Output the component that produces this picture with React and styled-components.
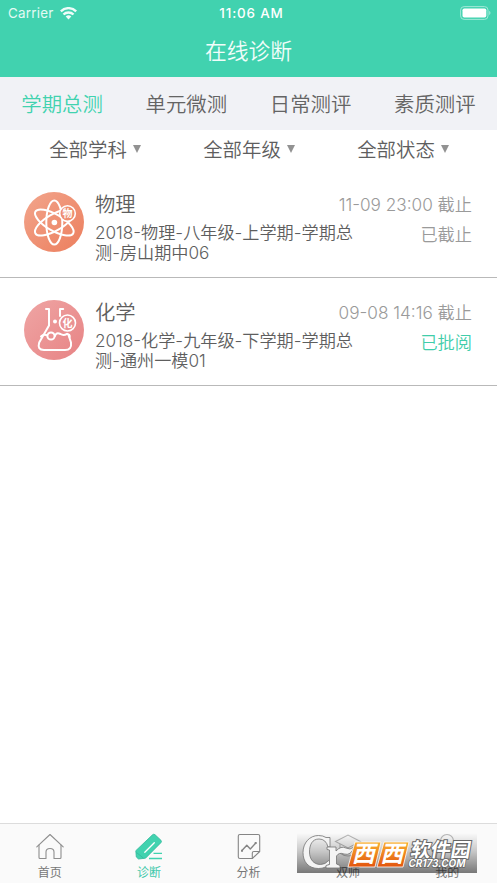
import React from 'react';
import styled, { createGlobalStyle } from 'styled-components';

const GlobalStyle = createGlobalStyle`
  * {
    box-sizing: border-box;
  }

  body {
    margin: 0;
    background: #fff;
    font-family: Inter, 'Noto Sans CJK SC', sans-serif;
    font-weight: 350;
    color: #5e5e5e;
  }

  svg {
    flex: none;
  }
`;

const Screen = styled.div`
  width: 100%;
  height: 883px;
  display: flex;
  flex-direction: column;
  overflow: hidden;
  position: relative;
`;

const Header = styled.header`
  height: 77px;
  flex: none;
  background: #41d2af;
  color: #fff;
`;

const StatusBar = styled.div`
  height: 26px;
  padding: 0 6px 0 8px;
  display: grid;
  grid-template-columns: 1fr auto 1fr;
  align-items: center;
  font-size: 13.4px;
  line-height: 26px;
`;

const Carrier = styled.div`
  display: flex;
  align-items: center;
  gap: 6px;
  letter-spacing: 0.25px;
  font-weight: 400;
  color: #e4faf4;
`;

const Clock = styled.div`
  font-weight: 500;
  font-size: 13.4px;
  letter-spacing: 0.85px;
  padding-left: 4px;
  color: #fff;
`;

const BatteryHolder = styled.div`
  display: flex;
  justify-content: flex-end;
  padding-bottom: 1px;
`;

const PageTitle = styled.h1`
  margin: 0;
  font-size: 21.8px;
  font-weight: 350;
  line-height: 50px;
  text-align: center;
  color: #f1fdfa;
`;

const Tabs = styled.nav`
  height: 53px;
  flex: none;
  display: flex;
  background: #f1f2f6;
`;

const Tab = styled.div`
  flex: 1;
  text-align: center;
  font-size: 20.4px;
  line-height: 55px;
  color: ${props => (props.$active ? '#41d2af' : '#646464')};
`;

const Filters = styled.div`
  height: 40px;
  flex: none;
  display: flex;
  padding: 0 17px 0 18px;
`;

const Filter = styled.div`
  flex: 1;
  display: flex;
  align-items: center;
  justify-content: center;
  gap: 6px;
  font-size: 19.4px;
  line-height: 40px;
  height: 40px;
`;

const Caret = styled.i`
  margin-top: -2px;
  border-left: 4px solid transparent;
  border-right: 4px solid transparent;
  border-top: 8px solid #929292;
`;

const Row = styled.article`
  height: 108px;
  flex: none;
  display: flex;
  padding: 22px 25px 0 24px;
  border-bottom: 1px solid #b9b9b9;
`;

const Info = styled.div`
  flex: 1;
  min-width: 0;
  padding-left: 11px;
`;

const Subject = styled.h2`
  margin: 0;
  height: 31px;
  font-size: 20.3px;
  font-weight: 350;
  line-height: 26px;
`;

const Description = styled.p`
  margin: 0;
  font-size: 17.15px;
  line-height: 20px;
  white-space: nowrap;
`;

const Meta = styled.div`
  text-align: right;
  font-size: 17.2px;
  line-height: 25px;
  white-space: nowrap;
  color: #9a9a9a;
`;

const Status = styled.div`
  margin-top: 5px;
  color: ${props => (props.$done ? '#41cdaa' : '#9a9a9a')};
`;

const TabBar = styled.footer`
  height: 60px;
  margin-top: auto;
  flex: none;
  display: flex;
  background: #fafafa;
  border-top: 1px solid #dcdcdc;
`;

const BarItem = styled.div`
  flex: 1;
  display: flex;
  flex-direction: column;
  align-items: center;
  padding-top: 8px;
  font-size: 12px;
  line-height: 16px;
  font-weight: 400;
  color: ${props => (props.$active ? '#41c8aa' : '#777')};

  svg {
    margin-bottom: 3px;
  }
`;

const Watermark = styled.svg`
  position: absolute;
  right: 20px;
  bottom: 10px;
`;

function Wifi() {
  return (
    <svg width="17" height="13" viewBox="0 0 17 13" fill="none" stroke="#effcf9" strokeWidth="2.4">
      <path d="M.8 4.3a11 11 0 0 1 15.4 0" />
      <path d="M3.5 7.5a7.1 7.1 0 0 1 10 0" />
      <path d="M8.5 12.5 5.7 9.6a4 4 0 0 1 5.6 0Z" fill="#effcf9" stroke="none" />
    </svg>
  );
}

function Battery() {
  return (
    <svg width="31" height="14" viewBox="0 0 31 14">
      <rect x=".6" y=".6" width="27.4" height="12.8" rx="3.5" fill="none" stroke="#a0e8d7" />
      <rect x="2.5" y="2.5" width="23.8" height="9" rx="1.8" fill="#fff" />
      <path d="M29.2 4.8q2.6 2.2 0 4.4Z" fill="#a0e8d7" />
    </svg>
  );
}

function PhysicsIcon() {
  return (
    <svg width="60" height="60" viewBox="0 0 60 60">
      <defs>
        <linearGradient id="physics" x1="0" y1="0" x2="1" y2="1">
          <stop offset="0" stopColor="#f2a58c" />
          <stop offset="1" stopColor="#ec7e5d" />
        </linearGradient>
      </defs>
      <circle cx="30" cy="30" r="30" fill="url(#physics)" />
      <g fill="none" stroke="#fff" strokeWidth="2">
        <ellipse cx="30.3" cy="30.5" rx="8" ry="22" />
        <ellipse cx="30.3" cy="30.5" rx="8.2" ry="21.8" transform="rotate(60 30.3 30.5)" />
        <ellipse cx="30.3" cy="30.5" rx="8.2" ry="21.8" transform="rotate(-60 30.3 30.5)" />
      </g>
      <circle cx="30.4" cy="30.5" r="2.8" fill="#fff" />
      <circle cx="43.5" cy="21.5" r="7.8" fill="#ee8e71" stroke="#fff" strokeWidth="1.6" />
      <text x="43.5" y="25.2" fontSize="10" fontWeight="700" textAnchor="middle" fill="#fff">物</text>
    </svg>
  );
}

function ChemistryIcon() {
  return (
    <svg width="60" height="60" viewBox="0 0 60 60">
      <defs>
        <linearGradient id="chemistry" x1="0" y1="0" x2="1" y2="1">
          <stop offset="0" stopColor="#efa5a4" />
          <stop offset="1" stopColor="#e78384" />
        </linearGradient>
      </defs>
      <circle cx="30" cy="30" r="30" fill="url(#chemistry)" />
      <g fill="none" stroke="#fff" strokeWidth="2" strokeLinecap="round" strokeLinejoin="round">
        <path d="M22 9h3v16.5L15.2 42.5Q13 50 20 50h21q7 0 6-7.5L44.5 35" />
        <path d="M39.2 9H36v7" />
        <path d="M17 36.500q2.500-2.500 6-1.200M31 36q1-4 5.500-2 3 2 6.500-.2 3 .8 2.700 3.200" />
        <circle cx="27" cy="36" r="3.6" />
      </g>
      <circle cx="31" cy="21.5" r="2" fill="#fff" />
      <circle cx="43.5" cy="23" r="8" fill="#ea9293" stroke="#fff" strokeWidth="1.6" />
      <text x="43.5" y="26.7" fontSize="10" fontWeight="700" textAnchor="middle" fill="#fff">化</text>
    </svg>
  );
}

function HomeIcon() {
  return (
    <svg width="28" height="30" viewBox="0 0 28 30" fill="none" stroke="#8e8e8e" strokeWidth="1.1" strokeLinejoin="round" strokeLinecap="round">
      <path d="M.8 14.8 14 2.5l13.2 12.3" />
      <path d="M3 13v12.5q0 1 1 1h6V20q0-3.5 4-3.5t4 3.5v6.5h6q1 0 1-1V13" />
    </svg>
  );
}

function EditIcon() {
  return (
    <svg width="28" height="30" viewBox="0 0 28 30">
      <path d="M17.5 2.8q1.3-1.2 2.6 0l5.8 5.4q1.2 1.3 0 2.5L10.5 26.2 3.5 27 1.3 25 .8 18.7Z" fill="#41d2af" stroke="#31b99a" strokeWidth=".8" />
      <path d="m1.5 20.5 7 5.7" stroke="#31b99a" strokeWidth=".8" />
      <path d="m9.8 20.3 9.5-9.500" stroke="#fff" strokeWidth="1.3" strokeLinecap="round" />
      <path d="M18.5 21.3H27M14 26.5h13" stroke="#41d2af" strokeWidth="1.3" />
    </svg>
  );
}

function ChartIcon() {
  return (
    <svg width="28" height="30" viewBox="0 0 28 30" fill="none" stroke="#858585" strokeWidth="1.1" strokeLinejoin="round">
      <path d="M17.3 26.5H5Q3.3 26.5 3.3 25V4q0-1.5 1.6-1.5h18.2q1.6 0 1.6 1.5v15.5Z" />
      <path d="M17.3 26.5v-5.5q0-1.5 1.6-1.5h5.8" />
      <path d="m7 18.5 4.8-5.3 3.5 3.8 5.3-5.8" strokeWidth="1.4" />
      <path d="M6 18.8h2M19.7 11h2" strokeWidth="2" />
    </svg>
  );
}

function TeacherIcon() {
  return (
    <svg width="28" height="30" viewBox="0 0 28 30" fill="none" stroke="#b8b8b8" strokeWidth="1.1">
      <path d="M1.5 9.5 14 3l12.5 6.5L14 16Z" />
      <path d="M6 12v9q8 6 16 0v-9" />
    </svg>
  );
}

function UserIcon() {
  return (
    <svg width="28" height="30" viewBox="0 0 28 30" fill="none" stroke="#b8b8b8" strokeWidth="1.1">
      <circle cx="14" cy="9" r="6.5" />
      <path d="M3 27q0-11 11-11t11 11Z" />
    </svg>
  );
}

function SiteMark() {
  return (
    <Watermark width="180" height="40" viewBox="0 0 180 40">
      <defs>
        <linearGradient id="shade" x1="0" y1="0" x2="0" y2="1">
          <stop offset="0" stopColor="#000" stopOpacity="0" />
          <stop offset="0.45" stopColor="#000" stopOpacity="0.2" />
          <stop offset="1" stopColor="#000" stopOpacity="0.52" />
        </linearGradient>
        <linearGradient id="orange" x1="0" y1="0" x2="0" y2="1">
          <stop offset="0" stopColor="#f9b02e" />
          <stop offset="1" stopColor="#e2540f" />
        </linearGradient>
      </defs>
      <rect width="180" height="40" fill="url(#shade)" />
      <g fill="#f4f4f4" stroke="#747474" strokeWidth=".8">
        <path d="M33 4.500V14h-2Q29 6 22 6C15 6 12.500 12 12.500 19s4 12.500 11 12.500q5 0 8-4l2 2.500q-4.500 5.500-12 5.500C11.500 35.500 6 29 6 19.500S12.500 2.500 21.500 2.500q4.500 0 7.500 2Z" />
        <path d="M30 14h9v4q5-5.500 10-3 4 2.500 8-1-3 9-10 7-5-2-7.500 2v8l3.500 1.500V35H29v-2.500l3.500-1V17L30 16.500Z" />
      </g>
      <g stroke="#fff" strokeWidth=".8">
        <path d="m58 9h26l-6 25H51Z" fill="url(#orange)" />
        <path d="m87 9h25l-6 25H80Z" fill="url(#orange)" />
      </g>
      <g fill="#fff" fontSize="23" fontWeight="700" transform="skewX(-14)">
        <text x="62" y="29.5">西</text>
        <text x="90.5" y="29.5">西</text>
      </g>
      <g fill="#fff" stroke="#666" strokeWidth="2" paintOrder="stroke" fontWeight="700" transform="skewX(-10)">
        <text x="117" y="24" fontSize="20" textLength="60">软件园</text>
        <text x="117" y="34.5" fontSize="11" textLength="57" lengthAdjust="spacingAndGlyphs" strokeWidth="1.5">CR173.COM</text>
      </g>
    </Watermark>
  );
}

const tabs = ['学期总测', '单元微测', '日常测评', '素质测评'];
const filters = ['全部学科', '全部年级', '全部状态'];

const tests = [
  {
    subject: '物理',
    icon: <PhysicsIcon />,
    lines: ['2018-物理-八年级-上学期-学期总', '测-房山期中06'],
    deadline: '11-09 23:00 截止',
    status: '已截止'
  },
  {
    subject: '化学',
    icon: <ChemistryIcon />,
    lines: ['2018-化学-九年级-下学期-学期总', '测-通州一模01'],
    deadline: '09-08 14:16 截止',
    status: '已批阅',
    done: true
  }
];

const barItems = [
  { label: '首页', icon: <HomeIcon /> },
  { label: '诊断', icon: <EditIcon />, active: true },
  { label: '分析', icon: <ChartIcon /> },
  { label: '双师', icon: <TeacherIcon /> },
  { label: '我的', icon: <UserIcon /> }
];

function TestRow({ test }) {
  return (
    <Row>
      {test.icon}
      <Info>
        <Subject>{test.subject}</Subject>
        <Description>
          {test.lines[0]}
          <br />
          {test.lines[1]}
        </Description>
      </Info>
      <Meta>
        <div>{test.deadline}</div>
        <Status $done={test.done}>{test.status}</Status>
      </Meta>
    </Row>
  );
}

function App() {
  return (
    <Screen>
      <GlobalStyle />
      <Header>
        <StatusBar>
          <Carrier>
            Carrier
            <Wifi />
          </Carrier>
          <Clock>11:06 AM</Clock>
          <BatteryHolder>
            <Battery />
          </BatteryHolder>
        </StatusBar>
        <PageTitle>在线诊断</PageTitle>
      </Header>
      <Tabs>
        {tabs.map((tab, i) => (
          <Tab key={tab} $active={i === 0}>
            {tab}
          </Tab>
        ))}
      </Tabs>
      <Filters>
        {filters.map(filter => (
          <Filter key={filter}>
            {filter}
            <Caret />
          </Filter>
        ))}
      </Filters>
      {tests.map(test => (
        <TestRow key={test.subject} test={test} />
      ))}
      <TabBar>
        {barItems.map(item => (
          <BarItem key={item.label} $active={item.active}>
            {item.icon}
            {item.label}
          </BarItem>
        ))}
      </TabBar>
      <SiteMark />
    </Screen>
  );
}

export default App;
